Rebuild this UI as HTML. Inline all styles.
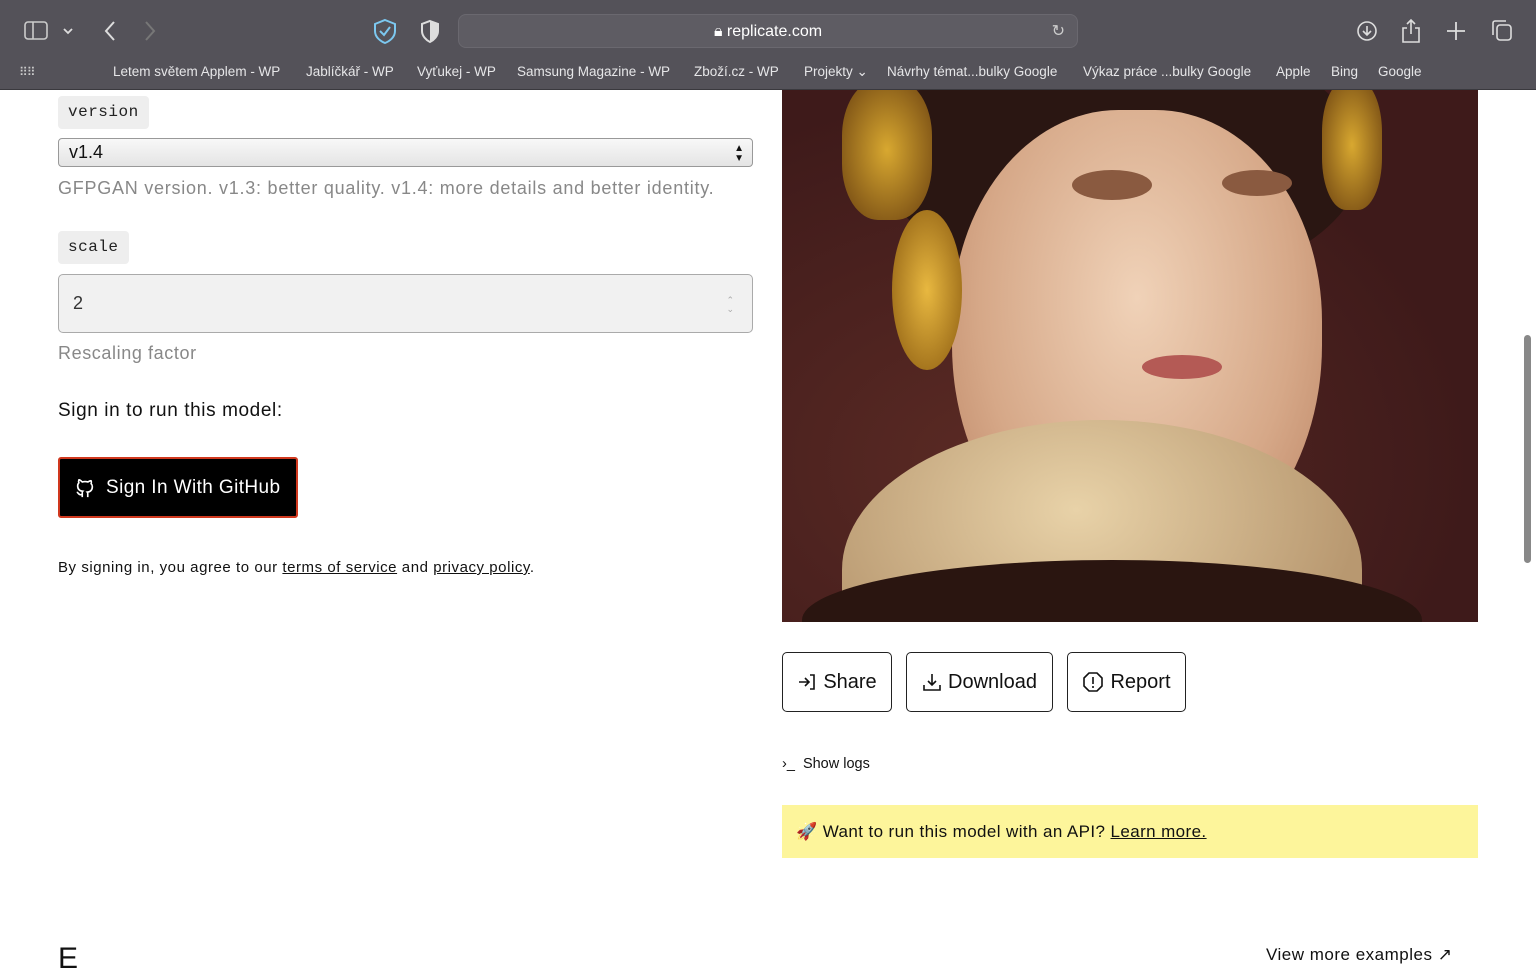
<!DOCTYPE html>
<html><head><meta charset="utf-8"><style>
*{margin:0;padding:0;box-sizing:border-box}
body{width:1536px;height:960px;overflow:hidden;background:#fff;font-family:"Liberation Sans",sans-serif;position:relative;color:#111}
.bar{position:absolute;left:0;top:0;width:1536px;height:90px;background:#545259;border-bottom:1px solid #3a393e}
.url{position:absolute;left:458px;top:14px;width:620px;height:34px;border-radius:8px;background:#5e5c63;border:1px solid #6a686f;color:#fff;font-size:16px;text-align:center;line-height:33px}
.bm{position:absolute;top:64px;font-size:13.5px;color:#e6e6e8;white-space:nowrap}
.a{position:absolute}
.tag{position:absolute;background:#eee;border-radius:4px;font-family:"Liberation Mono",monospace;font-size:16px;padding:0 10px;height:33px;line-height:33px;color:#222;letter-spacing:0.5px}
.gray{color:#888;font-size:18px}
.btn{position:absolute;top:652px;height:60px;border:1.5px solid #222;border-radius:5px;font-size:20px;display:flex;align-items:center;justify-content:center;gap:6px}
</style></head><body>
<div class="bar">
<svg class="a" style="left:24px;top:20px" width="60" height="22" viewBox="0 0 60 22"><rect x="1" y="2" width="22" height="17" rx="3" fill="none" stroke="#ccc" stroke-width="1.6"/><line x1="9" y1="2" x2="9" y2="19" stroke="#ccc" stroke-width="1.6"/><path d="M40 9l4 4 4-4" fill="none" stroke="#ddd" stroke-width="1.8"/></svg>
<svg class="a" style="left:100px;top:20px" width="60" height="22"><path d="M14 2L6 11l8 9" fill="none" stroke="#ddd" stroke-width="2"/><path d="M46 2l8 9-8 9" fill="none" stroke="#777" stroke-width="2"/></svg>
<svg class="a" style="left:372px;top:18px" width="70" height="26"><path d="M13 2l10 4v7c0 6-5 10-10 12C8 23 3 19 3 13V6z" fill="none" stroke="#7cc8f0" stroke-width="2"/><path d="M8 13l4 4 6-8" fill="none" stroke="#7cc8f0" stroke-width="2"/><path d="M58 3l8 3v7c0 5-4 9-8 11-4-2-8-6-8-11V6z" fill="none" stroke="#ddd" stroke-width="2"/><path d="M58 3v21c4-2 8-6 8-11V6z" fill="#ddd"/></svg>
<div class="url">🔒︎ replicate.com<span style="position:absolute;right:12px;color:#ccc">↻</span></div>
<svg class="a" style="left:1355px;top:18px" width="165" height="26"><circle cx="12" cy="13" r="9" fill="none" stroke="#ddd" stroke-width="1.6"/><path d="M12 8v9M8 13l4 4 4-4" fill="none" stroke="#ddd" stroke-width="1.6"/><path d="M52 10h-4v14h16V10h-4M56 2v14M52 6l4-4 4 4" fill="none" stroke="#ddd" stroke-width="1.6"/><path d="M101 4v18M92 13h18" stroke="#ddd" stroke-width="1.8"/><rect x="142" y="7" width="14" height="15" rx="3" fill="none" stroke="#ddd" stroke-width="1.6"/><path d="M138 17V5a2 2 0 012-2h11" fill="none" stroke="#ddd" stroke-width="1.6"/></svg>
<div class="a" style="left:19px;top:65px;color:#ccc;font-size:12px;letter-spacing:-1px">⠿⠿</div>
<div class="bm" style="left:113px">Letem světem Applem - WP</div>
<div class="bm" style="left:306px">Jablíčkář - WP</div>
<div class="bm" style="left:417px">Vyťukej - WP</div>
<div class="bm" style="left:517px">Samsung Magazine - WP</div>
<div class="bm" style="left:694px">Zboží.cz - WP</div>
<div class="bm" style="left:804px">Projekty ⌄</div>
<div class="bm" style="left:887px">Návrhy témat...bulky Google</div>
<div class="bm" style="left:1083px">Výkaz práce ...bulky Google</div>
<div class="bm" style="left:1276px">Apple</div>
<div class="bm" style="left:1331px">Bing</div>
<div class="bm" style="left:1378px">Google</div>
</div>

<div class="tag" style="left:58px;top:96px">version</div>
<div class="a" style="left:58px;top:138px;width:695px;height:29px;border:1px solid #999;border-radius:4px;background:linear-gradient(#f8f8f8,#e4e4e4);font-size:18px;line-height:27px;padding-left:10px">v1.4<span style="position:absolute;right:8px;font-size:10px;line-height:10px;top:5px">▲<br>▼</span></div>
<div class="a gray" style="left:58px;top:178px;letter-spacing:0.75px">GFPGAN version. v1.3: better quality. v1.4: more details and better identity.</div>
<div class="tag" style="left:58px;top:231px">scale</div>
<div class="a" style="left:58px;top:274px;width:695px;height:59px;border:1px solid #aaa;border-radius:5px;background:#f1f1f1;font-size:18px;line-height:57px;padding-left:14px;color:#333">2<span style="position:absolute;right:18px;font-size:9px;color:#aaa;line-height:9px;top:21px">⌃<br>⌄</span></div>
<div class="a gray" style="left:58px;top:343px;letter-spacing:0.6px">Rescaling factor</div>
<div class="a" style="left:58px;top:400px;font-size:19px;letter-spacing:0.6px">Sign in to run this model:</div>
<div class="a" style="left:58px;top:457px;width:240px;height:61px;background:#000;border:2px solid #d0381e;border-radius:3px;color:#fff;font-size:19px;display:flex;align-items:center;padding-left:14px;gap:10px;letter-spacing:0.4px">
<svg width="22" height="22" viewBox="0 0 24 24"><path d="M9 19c-4 1.5-4-2-6-2.5M15 22v-3.5c0-1 .1-1.4-.5-2 2.8-.3 5.5-1.4 5.5-6a4.6 4.6 0 00-1.3-3.2 4.2 4.2 0 00-.1-3.2s-1-.3-3.4 1.3a11.6 11.6 0 00-6.2 0C6.5 2.8 5.4 3.1 5.4 3.1a4.2 4.2 0 00-.1 3.2A4.6 4.6 0 004 9.5c0 4.6 2.7 5.7 5.5 6-.6.6-.6 1.2-.5 2V22" fill="none" stroke="#fff" stroke-width="1.8"/></svg>Sign In With GitHub</div>
<div class="a" style="left:58px;top:559px;font-size:15px;letter-spacing:0.55px">By signing in, you agree to our <u>terms of service</u> and <u>privacy policy</u>.</div>
<div class="a" style="left:58px;top:942px;font-size:30px">E</div>

<div class="a" style="left:782px;top:90px;width:696px;height:532px;overflow:hidden;background:radial-gradient(ellipse at 30% 70%,#5a2a24,#3e1a1a 70%)">
<div class="a" style="left:100px;top:-60px;width:480px;height:260px;border-radius:50%;background:#2a1612"></div>
<div class="a" style="left:170px;top:20px;width:370px;height:470px;border-radius:45% 45% 50% 50%;background:radial-gradient(ellipse at 50% 40%,#f0d2b8,#d6a888 60%,#b88060)"></div>
<div class="a" style="left:60px;top:330px;width:520px;height:300px;border-radius:50% 50% 0 0;background:radial-gradient(ellipse at 45% 30%,#e8d2a8,#b89870 70%)"></div>
<div class="a" style="left:20px;top:470px;width:620px;height:120px;border-radius:50% 50% 0 0;background:#2a1510"></div>
<div class="a" style="left:110px;top:120px;width:70px;height:160px;border-radius:50%;background:radial-gradient(#e8b840,#8a5a10)"></div>
<div class="a" style="left:60px;top:-10px;width:90px;height:140px;border-radius:40%;background:radial-gradient(#d8a830,#6a4010)"></div>
<div class="a" style="left:540px;top:-10px;width:60px;height:130px;border-radius:40%;background:radial-gradient(#d8a830,#6a4010)"></div>
<div class="a" style="left:290px;top:80px;width:80px;height:30px;border-radius:50%;background:#8a5a40"></div>
<div class="a" style="left:440px;top:80px;width:70px;height:26px;border-radius:50%;background:#8a5a40"></div>
<div class="a" style="left:360px;top:265px;width:80px;height:24px;border-radius:50%;background:#b45a55"></div>
</div>

<div class="btn" style="left:782px;width:110px"><svg width="20" height="20" viewBox="0 0 20 20" fill="none" stroke="#111" stroke-width="1.6"><path d="M2 10h10M8 6l4 4-4 4M13 3h4v14h-4"/></svg>Share</div>
<div class="btn" style="left:906px;width:147px"><svg width="20" height="20" viewBox="0 0 20 20" fill="none" stroke="#111" stroke-width="1.6"><path d="M10 2v11M6 9l4 4 4-4M2 13v5h16v-5"/></svg>Download</div>
<div class="btn" style="left:1067px;width:119px"><svg width="22" height="22" viewBox="0 0 22 22" fill="none" stroke="#111" stroke-width="1.6"><path d="M7 2h8l5 5v8l-5 5H7l-5-5V7z"/><path d="M11 6v7M11 15v2"/></svg>Report</div>
<div class="a" style="left:782px;top:756px;font-size:14.5px">›_ &nbsp;Show logs</div>
<div class="a" style="left:782px;top:805px;width:696px;height:53px;background:#fdf59b;font-size:17px;line-height:53px;padding-left:14px;letter-spacing:0.4px">🚀 Want to run this model with an API? <u>Learn more.</u></div>
<div class="a" style="left:1266px;top:945px;font-size:17px;letter-spacing:0.5px">View more examples ↗</div>
<div class="a" style="left:1524px;top:335px;width:7px;height:228px;border-radius:4px;background:#888"></div>
</body></html>
